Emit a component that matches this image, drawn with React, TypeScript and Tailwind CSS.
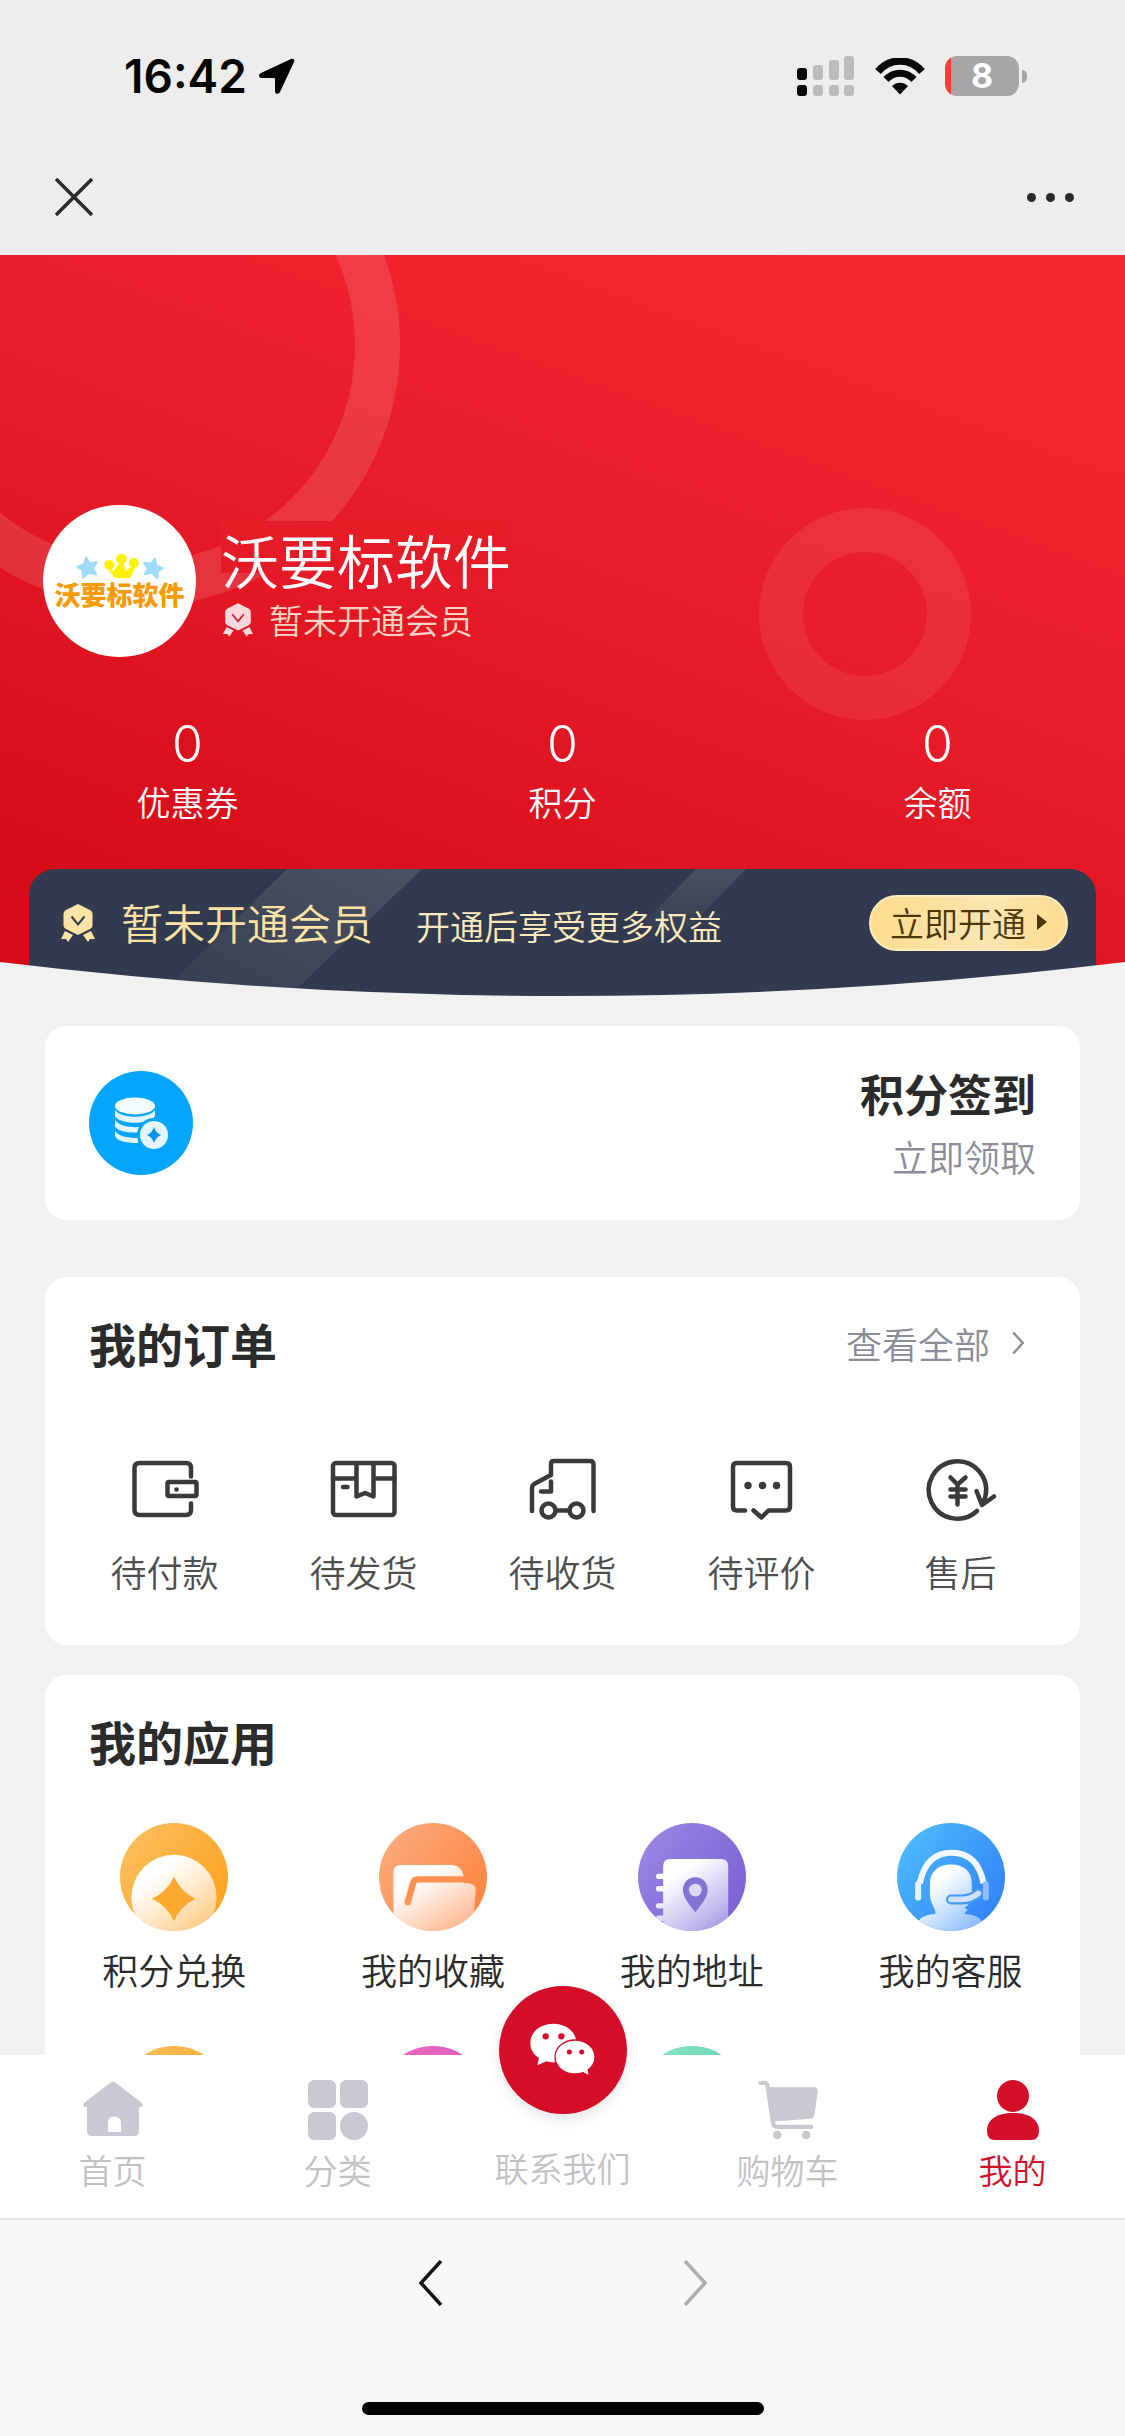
import React from "react";

type IconProps = { className?: string };

function LocationIcon() {
  return (
    <svg viewBox="0 0 36 36" className="h-9 w-9" fill="#050505" aria-hidden="true">
      <path d="M32 1 2 15c-3 1.500-2.500 5 1 5h11.500c1 0 1.500.500 1.500 1.500V33c0 3.500 3.500 4 5 1L35 4c1-2.500-.8-4-3-3Z" />
    </svg>
  );
}

function SignalIcon() {
  return (
    <svg viewBox="0 0 58 40" className="h-10 w-[58px]" aria-hidden="true">
      <g fill="#050505">
        <rect x="0" y="12" width="10" height="12" rx="3" />
        <rect x="0" y="29" width="10" height="11" rx="3" />
      </g>
      <g fill="#bcbcbc">
        <rect x="16" y="9" width="10" height="15" rx="3" />
        <rect x="32" y="4" width="10" height="20" rx="3" />
        <rect x="47" y="0" width="10" height="24" rx="3" />
        <rect x="16" y="29" width="10" height="11" rx="3" />
        <rect x="32" y="29" width="10" height="11" rx="3" />
        <rect x="47" y="29" width="10" height="11" rx="3" />
      </g>
    </svg>
  );
}

function WifiIcon() {
  return (
    <svg viewBox="0 0 50 37" className="h-[37px] w-[50px]" fill="none" stroke="#080808" aria-hidden="true">
      <path d="M3 13.500C15-.5 35-.5 47 13.500" strokeWidth="7.500" />
      <path d="M11 21.500c8-8.500 20-8.500 28 0" strokeWidth="7" />
      <path d="M17 28c4.500-4.500 11.500-4.500 16 0l-8 8.500Z" fill="#080808" stroke="none" />
    </svg>
  );
}

function Battery() {
  return (
    <div className="flex items-center gap-[3px]" role="img" aria-label="8%">
      <div className="flex h-10 w-[74px] items-center justify-center rounded-[12px] bg-[linear-gradient(90deg,#fb3b34_6px,#a6a6a6_6px)]">
        <span className="font-[Inter] text-[34px] leading-10 font-bold text-white">8</span>
      </div>
      <div className="h-[13px] w-[5px] rounded-r-full bg-[#a6a6a6]" />
    </div>
  );
}

function MedalIcon({ className, tick }: IconProps & { tick: string }) {
  return (
    <svg viewBox="0 0 34 38" className={className} aria-hidden="true">
      <g fill="currentColor">
        <path d="M17 0 29 6c1.500 1 2.500 2 2.500 4v11c0 2-1 3-2.500 4l-12 6-12-6c-1.500-1-2.500-2-2.500-4V10c0-2 1-3 2.500-4Z" />
        <path d="M4 27 0 35h5l2 3 5-7Z" />
        <path d="m30 27 4 8h-5l-2 3-5-7Z" />
      </g>
      <path d="m10.500 12.500 6.500 8 6.500-8" fill="none" stroke={tick} strokeWidth="2" />
    </svg>
  );
}

function BrandMark() {
  return (
    <svg viewBox="203 220 246 76" className="h-[27px] w-[88px]" aria-hidden="true">
      <g fill="#9fdcfb" stroke="#9fdcfb" strokeWidth="7" strokeLinejoin="round">
        <path d="m231 234 9 16 20-4-11 17 9 17-20-5-15 13-2-20-14-9 18-7Z" />
        <path d="m424 237-10 13-19-2 10 15-8 16 19-4 15 15 1-19 13-8-17-7Z" />
      </g>
      <g fill="#fff200">
        <circle cx="296" cy="254" r="14" />
        <circle cx="330" cy="237" r="15" />
        <circle cx="365" cy="248" r="14" />
        <path d="m291 262 16 9 17-22h12l6 22 18-14 8 4-13 30-45-1Z" />
      </g>
    </svg>
  );
}

function CoinsIcon() {
  return (
    <svg viewBox="0 0 104 104" className="h-[104px] w-[104px]" aria-hidden="true">
      <circle cx="52" cy="52" r="52" fill="#04a6fd" />
      <ellipse cx="46" cy="35" rx="20" ry="8.500" fill="#f2fbff" />
      <g fill="#e3f5ff">
        <path d="M26 39c6 9 34 9 40 0v6c-5 9-36 9-40 0Z" />
        <path d="M26 49c6 9 30 9 37 3l-8 9c-10 1-26 1-29-6Z" />
        <path d="M26 60c4 6 14 7 24 7l-1 5c-10 0-20-1-23-7Z" />
      </g>
      <circle cx="65" cy="64" r="17" fill="#04a6fd" />
      <circle cx="65" cy="64" r="14" fill="#e3f5ff" />
      <path d="M65 56q2 6 7 8-5 2-7 8-2-6-7-8 5-2 7-8Z" fill="#0592ea" />
    </svg>
  );
}

function OrderIcon({ children }: { children: React.ReactNode }) {
  return (
    <svg
      viewBox="0 0 80 80"
      className="h-20 w-20"
      fill="none"
      stroke="#3a3a3a"
      strokeWidth="4.500"
      strokeLinecap="round"
      strokeLinejoin="round"
      aria-hidden="true"
    >
      {children}
    </svg>
  );
}

const orders = [
  {
    label: "待付款",
    art: (
      <>
        <path d="M66 26.500V18q0-5-5-5H14.500q-5 0-5 5v42q0 5 5 5H61q5 0 5-5v-6.500" />
        <rect x="42.500" y="32" width="29" height="14" rx="1.500" />
        <circle cx="51.500" cy="39.500" r="2.300" fill="#3a3a3a" stroke="none" />
      </>
    ),
  },
  {
    label: "待发货",
    art: (
      <>
        <rect x="9" y="13" width="61.500" height="52" rx="3" />
        <path d="M9 28.500h23.500M49.500 28.500h21M32.500 13v33.500L41 43l8.500 3.500V13M19 37h4.500" />
      </>
    ),
  },
  {
    label: "待收货",
    art: (
      <>
        <path d="M9 61V38q0-3 3-4.500L28 25V14q0-3 3-3h36q3.500 0 3.500 3.500V61M28 31.500v10H18M33 60.500h13" />
        <circle cx="25.500" cy="60.500" r="7" />
        <circle cx="53.500" cy="60.500" r="7" />
      </>
    ),
  },
  {
    label: "待评价",
    art: (
      <>
        <path d="M23 60.500h-8q-4 0-4-4V17q0-4 4-4h49q4 0 4 4v39.500q0 4-4 4H46.500l-7 7-8-7" />
        <g fill="#3a3a3a" stroke="none">
          <circle cx="26" cy="35.500" r="3.700" />
          <circle cx="40.500" cy="35.500" r="3.700" />
          <circle cx="54.500" cy="35.500" r="3.700" />
        </g>
      </>
    ),
  },
  {
    label: "售后",
    art: (
      <>
        <path d="M56 61A28.700 28.700 0 1 1 64.500 46L61.500 54.500M55.500 41l5.500 14 12-8.500" />
        <path d="m29.500 27.500 7 7 8-7M36.500 34.500v20M29.500 39.500h15M29.500 46.500h15" />
      </>
    ),
  },
];

function AppIcon({ id, from, to, children }: { id: string; from: string; to: string; children?: React.ReactNode }) {
  return (
    <svg viewBox="0 0 322 322" className="h-[108px] w-[108px]" aria-hidden="true">
      <defs>
        <linearGradient id={id + "-bg"} x1="0.100" y1="0.200" x2="0.900" y2="0.800">
          <stop offset="0" stopColor={from} />
          <stop offset="1" stopColor={to} />
        </linearGradient>
        <linearGradient id={id + "-fg"} x1="0.300" y1="0.200" x2="0.850" y2="1">
          <stop offset="0" stopColor="#ffffff" />
          <stop offset="1" stopColor="#ffffff" stopOpacity="0.350" />
        </linearGradient>
        <clipPath id={id + "-clip"}>
          <circle cx="161" cy="161" r="161" />
        </clipPath>
      </defs>
      <g clipPath={"url(#" + id + "-clip)"}>
        <rect width="322" height="322" fill={"url(#" + id + "-bg)"} />
        {children}
      </g>
    </svg>
  );
}

const apps = [
  {
    label: "积分兑换",
    icon: (
      <AppIcon id="exchange" from="#fbbc57" to="#fda425">
        <circle cx="161" cy="222" r="127" fill="url(#exchange-fg)" />
        <path d="M161 160q22 46 64 66-42 20-64 66-22-46-66-66 44-20 66-66Z" fill="#fdaa32" />
      </AppIcon>
    ),
  },
  {
    label: "我的收藏",
    icon: (
      <AppIcon id="favorite" from="#fba979" to="#ff8540">
        <path
          d="M43 322V147q0-22 22-22h155q28 3 33 36v19h13q24 2 22 24l-8 118Z"
          fill="url(#favorite-fg)"
        />
        <path d="m86 236 16-58q3-10 14-10h139" fill="none" stroke="#ff8f4f" strokeWidth="19" />
        <circle cx="86" cy="236" r="9.500" fill="#ff9357" />
      </AppIcon>
    ),
  },
  {
    label: "我的地址",
    icon: (
      <AppIcon id="address" from="#9683e2" to="#7a63d6">
        <g fill="url(#address-fg)">
          <path d="M75 322v-30H58q-10-8 0-16h17v-21H58q-10-8 0-16h17v-35H58q-10-8 0-16h17v-21H58q-10-8 0-16h17v-22q0-22 22-22h150q22 0 22 22v193Z" />
        </g>
        <path d="M171 162c21 0 37 16 37 38 0 24-20 44-37 67-17-23-37-43-37-67 0-22 16-38 37-38Z" fill="#8573d4" />
        <circle cx="171" cy="200" r="19" fill="#dcd8f6" />
      </AppIcon>
    ),
  },
  {
    label: "我的客服",
    icon: (
      <AppIcon id="service" from="#4ab6fc" to="#3485f8">
        <path
          d="M98 182c0-38 26-58 63-58s62 20 62 56v40c-5 18-12 28-22 34l10 3-10 14c28 2 44 8 54 24v50H62v-50c10-16 26-22 52-24 4-15-16-28-16-60Z"
          fill="url(#service-fg)"
        />
        <path d="M161 228h32q28 0 49-18" fill="none" stroke="#4a98f5" strokeWidth="30" strokeLinecap="round" />
        <path d="M161 228h32q28 0 49-18" fill="none" stroke="#cfe2fd" strokeWidth="17" strokeLinecap="round" />
        <path d="M68 180C82 112 118 89 163 89s82 23 95 91" fill="none" stroke="#f2f8ff" strokeWidth="18" />
        <rect x="54" y="174" width="18" height="57" rx="8" fill="#e4f1ff" />
        <rect x="256" y="174" width="18" height="57" rx="8" fill="#8fbcfb" />
      </AppIcon>
    ),
  },
];

const tabs = [
  {
    label: "首页",
    icon: (
      <svg viewBox="0 0 60 60" className="h-[60px] w-[60px]" fill="#cac8d0" aria-hidden="true">
        <path d="M27 3q3-2.500 6 0l26 20q2 3-1 4h-2v24q0 5-5 5H38V43q0-6-6.500-6.500T25 43v9h13v4H9q-5 0-5-5V27H2q-3-1-1-4Z" />
      </svg>
    ),
  },
  {
    label: "分类",
    icon: (
      <svg viewBox="0 0 60 60" className="h-[60px] w-[60px]" fill="#cac8d0" aria-hidden="true">
        <rect x="0" y="0" width="28" height="28" rx="6" />
        <rect x="32" y="0" width="28" height="28" rx="6" />
        <rect x="0" y="32" width="28" height="28" rx="6" />
        <circle cx="46" cy="46" r="14" />
      </svg>
    ),
  },
  {
    label: "联系我们",
    icon: (
      <span className="-mt-[94px] mb-6 flex h-32 w-32 items-center justify-center rounded-full bg-[#d40d29] shadow-[0_6px_12px_rgba(120,130,150,0.180)]">
        <svg viewBox="0 0 384 384" className="h-32 w-32" aria-hidden="true">
          <g fill="#fff">
            <path d="M163 113c39 0 69 25 69 58s-30 58-69 58c-8 0-14-1-21-3l-27 12 5-22c-16-10-26-26-26-45 0-33 30-58 69-58Z" />
            <path
              d="M228 162c34 0 60 23 60 51 0 16-8 29-20 38l3 19-19-10c-8 3-16 4-24 4-34 0-60-23-60-51s26-51 60-51Z"
              stroke="#d40d29"
              strokeWidth="4"
            />
          </g>
          <g fill="#d40d29">
            <circle cx="140" cy="151" r="9.500" />
            <circle cx="187" cy="151" r="9.500" />
            <circle cx="211" cy="198" r="7.500" />
            <circle cx="248" cy="198" r="7.500" />
          </g>
        </svg>
      </span>
    ),
  },
  {
    label: "购物车",
    icon: (
      <svg viewBox="797 298 184 184" className="h-[60px] w-[60px]" fill="#cac8d0" aria-hidden="true">
        <path d="M828 320h140q13 0 12 14l-9 68q-2 13-14 15l-112 8Z" />
        <path d="M804 307h12q8 0 10 9l17 114q2 12 13 12h104" fill="none" stroke="#cac8d0" strokeWidth="13" strokeLinecap="round" />
        <circle cx="856" cy="467" r="13" />
        <circle cx="945" cy="467" r="13" />
      </svg>
    ),
  },
  {
    label: "我的",
    active: true,
    icon: (
      <svg viewBox="0 0 60 60" className="h-[60px] w-[60px]" fill="#d40d29" aria-hidden="true">
        <circle cx="30" cy="16" r="16" />
        <path d="M4 51C4 40 13 33 30 33s26 7 26 18q0 9-8 9H12q-8 0-8-9Z" />
      </svg>
    ),
  },
];

const stats = [
  { label: "优惠券", value: 0 },
  { label: "积分", value: 0 },
  { label: "余额", value: 0 },
];

function Chevron({ className, flip }: IconProps & { flip?: boolean }) {
  return (
    <svg viewBox="0 0 24 46" className={className} fill="none" stroke="currentColor" strokeWidth="3.500" aria-hidden="true">
      <path d={flip ? "M22 1 2 23l20 22" : "m2 1 20 22L2 45"} />
    </svg>
  );
}

export default function App() {
  return (
    <div className="flex h-screen flex-col overflow-hidden bg-[#f1f1f1] font-['Noto_Sans_CJK_SC',sans-serif] font-[350] text-[#2b2b2b]">
      <header className="h-[255px] shrink-0 bg-[#ededed]">
        <div className="flex h-[152px] items-center justify-between pr-[98px] pl-[124px]">
          <div className="flex items-center gap-3">
            <time className="font-[Inter] text-[46px] font-semibold text-[#050505]">16:42</time>
            <LocationIcon />
          </div>
          <div className="flex items-center gap-5">
            <SignalIcon />
            <WifiIcon />
            <Battery />
          </div>
        </div>
        <div className="flex h-[90px] items-center justify-between pr-[51px] pl-[55px]">
          <button type="button" aria-label="关闭">
            <svg viewBox="0 0 38 38" className="h-[38px] w-[38px]" stroke="#2b2b2b" strokeWidth="3.500" aria-hidden="true">
              <path d="m1 1 36 36M37 1 1 37" />
            </svg>
          </button>
          <button type="button" aria-label="更多" className="flex gap-[10px]">
            <i className="h-[9px] w-[9px] rounded-full bg-[#2b2b2b]" />
            <i className="h-[9px] w-[9px] rounded-full bg-[#2b2b2b]" />
            <i className="h-[9px] w-[9px] rounded-full bg-[#2b2b2b]" />
          </button>
        </div>
      </header>

      <main className="min-h-0 flex-1 overflow-y-auto [scrollbar-width:none]">
        <section className="relative overflow-hidden bg-[linear-gradient(200deg,#f62733_5%,#e81d29_45%,#d60b18_88%)] pt-[250px]">
          <div className="absolute -top-[172px] -left-[124px] h-[524px] w-[524px] rounded-full border-[45px] border-white/12" />
          <div className="absolute top-[253px] right-[154px] h-[212px] w-[212px] rounded-full border-[44px] border-white/8" />

          <div className="relative flex h-[152px] items-start gap-[25px] pl-[43px]">
            <div className="flex h-[152px] w-[153px] flex-col items-center rounded-full bg-white pt-12">
              <BrandMark />
              <span className="text-[26px] leading-7 font-black whitespace-nowrap text-[#f79a05]">沃要标软件</span>
            </div>
            <div className="pt-4 text-white">
              <h1 className="bg-[linear-gradient(#e71d28,#e41b26)] bg-[length:100%_52px] bg-no-repeat text-[58px] leading-[76px]">
                沃要标软件
              </h1>
              <p className="flex items-center gap-4 text-[34px] leading-[46px] text-[#fbd3c6]">
                <MedalIcon className="ml-[2px] h-[34px] w-[30px] text-[#fbd6da]" tick="#c92030" />
                暂未开通会员
              </p>
            </div>
          </div>

          <dl className="relative mt-[57px] grid grid-cols-3 text-center text-white">
            {stats.map((s) => (
              <div key={s.label} className="flex flex-col-reverse gap-1">
                <dt className="text-[34px] leading-12">{s.label}</dt>
                <dd className="font-[Inter] text-[50px] leading-[60px] font-light">{s.value}</dd>
              </div>
            ))}
          </dl>

          <div className="relative mx-[29px] mt-[43px] h-32 overflow-hidden rounded-t-[26px] bg-[#323a4f] pr-7 pl-8">
            <svg
              viewBox="0 0 1067 128"
              preserveAspectRatio="none"
              className="absolute inset-0 h-full w-full"
              aria-hidden="true"
            >
              <defs>
                <linearGradient id="shine-a" x1="0" y1="1" x2="1" y2="0">
                  <stop offset="0" stopColor="#fff" stopOpacity="0.020" />
                  <stop offset="1" stopColor="#fff" stopOpacity="0.120" />
                </linearGradient>
                <linearGradient id="shine-b" x1="0" y1="1" x2="0" y2="0">
                  <stop offset="0" stopColor="#fff" stopOpacity="0" />
                  <stop offset="1" stopColor="#fff" stopOpacity="0.110" />
                </linearGradient>
              </defs>
              <path d="M258 0h135L259 128H128Z" fill="url(#shine-a)" />
              <path d="M667 0h50l-70 72h-50Z" fill="url(#shine-b)" />
            </svg>
            <div className="relative flex h-[108px] items-center">
              <MedalIcon className="h-[38px] w-[34px] text-[#fbe3a6]" tick="#323a4f" />
              <strong className="ml-[26px] pb-1 text-[42px] font-[350] text-[#fce2a3]">暂未开通会员</strong>
              <span className="ml-[43px] pt-1 text-[34px] text-[#fbeabd]">开通后享受更多权益</span>
              <button
                type="button"
                className="ml-auto flex h-14 w-[199px] items-center justify-center gap-[11px] rounded-full border-2 border-[#fdebc0] bg-[linear-gradient(100deg,#fddc8c,#fce5b3_60%,#fddc8c)] pb-[2px] text-[34px] text-[#4b3708]"
              >
                立即开通
                <svg viewBox="0 0 10 16" className="h-4 w-[10px]" fill="#4b3708" aria-hidden="true">
                  <path d="M0 0 10 8 0 16Z" />
                </svg>
              </button>
            </div>
          </div>
          <svg
            viewBox="0 0 1125 35"
            preserveAspectRatio="none"
            className="absolute bottom-0 left-0 h-[35px] w-full"
            fill="#f1f1f1"
            aria-hidden="true"
          >
            <path d="M0 0Q562 68 1125 0V36H0Z" />
          </svg>
        </section>

        <div className="px-[45px]">
          <section className="mt-[29px] flex h-[194px] items-center justify-between rounded-[22px] bg-white px-11">
            <CoinsIcon />
            <div className="text-right">
              <h2 className="text-[44px] leading-[66px] font-bold">积分签到</h2>
              <a href="#checkin" className="block text-[36px] leading-[60px] text-[#8c8c98]">
                立即领取
              </a>
            </div>
          </section>

          <section className="mt-[57px] h-[368px] rounded-[22px] bg-white px-5">
            <div className="flex h-[132px] items-center justify-between pr-9 pl-6">
              <h2 className="text-[47px] font-bold">我的订单</h2>
              <a href="#orders" className="flex items-center gap-[22px] text-[36px] text-[#8c8c98]">
                查看全部
                <Chevron className="h-[22px] w-3 [stroke-width:5]" />
              </a>
            </div>
            <nav className="mt-[41px] grid grid-cols-5">
              {orders.map((o) => (
                <a key={o.label} href="#orders" className="flex flex-col items-center gap-4 text-[36px] leading-[50px] text-[#4e4e4e]">
                  <OrderIcon>{o.art}</OrderIcon>
                  {o.label}
                </a>
              ))}
            </nav>
          </section>

          <section className="mt-[30px] rounded-[22px] bg-white pb-10">
            <h2 className="flex h-[132px] items-center pl-11 text-[47px] font-bold">我的应用</h2>
            <nav className="mt-4 grid grid-cols-4 gap-y-[52px]">
              {apps.map((a) => (
                <a key={a.label} href="#app" className="flex flex-col items-center gap-[13px] text-[36px] leading-[50px]">
                  {a.icon}
                  {a.label}
                </a>
              ))}
              <div className="flex justify-center">
                <AppIcon id="extra-a" from="#f9bd55" to="#fba322" />
              </div>
              <div className="flex justify-center">
                <AppIcon id="extra-b" from="#ea66c2" to="#d955b4" />
              </div>
              <div className="flex justify-center">
                <AppIcon id="extra-c" from="#84e2c4" to="#5fcfa8" />
              </div>
            </nav>
          </section>
        </div>
      </main>

      <nav className="relative z-10 grid h-[163px] shrink-0 grid-cols-5 bg-white pt-[25px]">
        {tabs.map((t) => (
          <a
            key={t.label}
            href="#tab"
            aria-current={t.active ? "page" : undefined}
            className={
              t.active
                ? "flex flex-col items-center gap-[6px] text-[34px] leading-12 text-[#d40d29]"
                : "flex flex-col items-center gap-[6px] text-[34px] leading-12 text-[#c2c2c4]"
            }
          >
            {t.icon}
            {t.label}
          </a>
        ))}
      </nav>

      <footer className="flex h-[218px] shrink-0 flex-col items-center justify-between border-t-2 border-[#e6e6e6] bg-[#f7f7f7] pt-10 pb-[21px]">
        <div className="flex gap-[240px]">
          <button type="button" aria-label="后退" className="text-[#161616]">
            <Chevron flip className="h-[46px] w-6" />
          </button>
          <button type="button" aria-label="前进" className="text-[#adadad]">
            <Chevron className="h-[46px] w-6" />
          </button>
        </div>
        <div className="h-[13px] w-[402px] rounded-full bg-black" />
      </footer>
    </div>
  );
}
